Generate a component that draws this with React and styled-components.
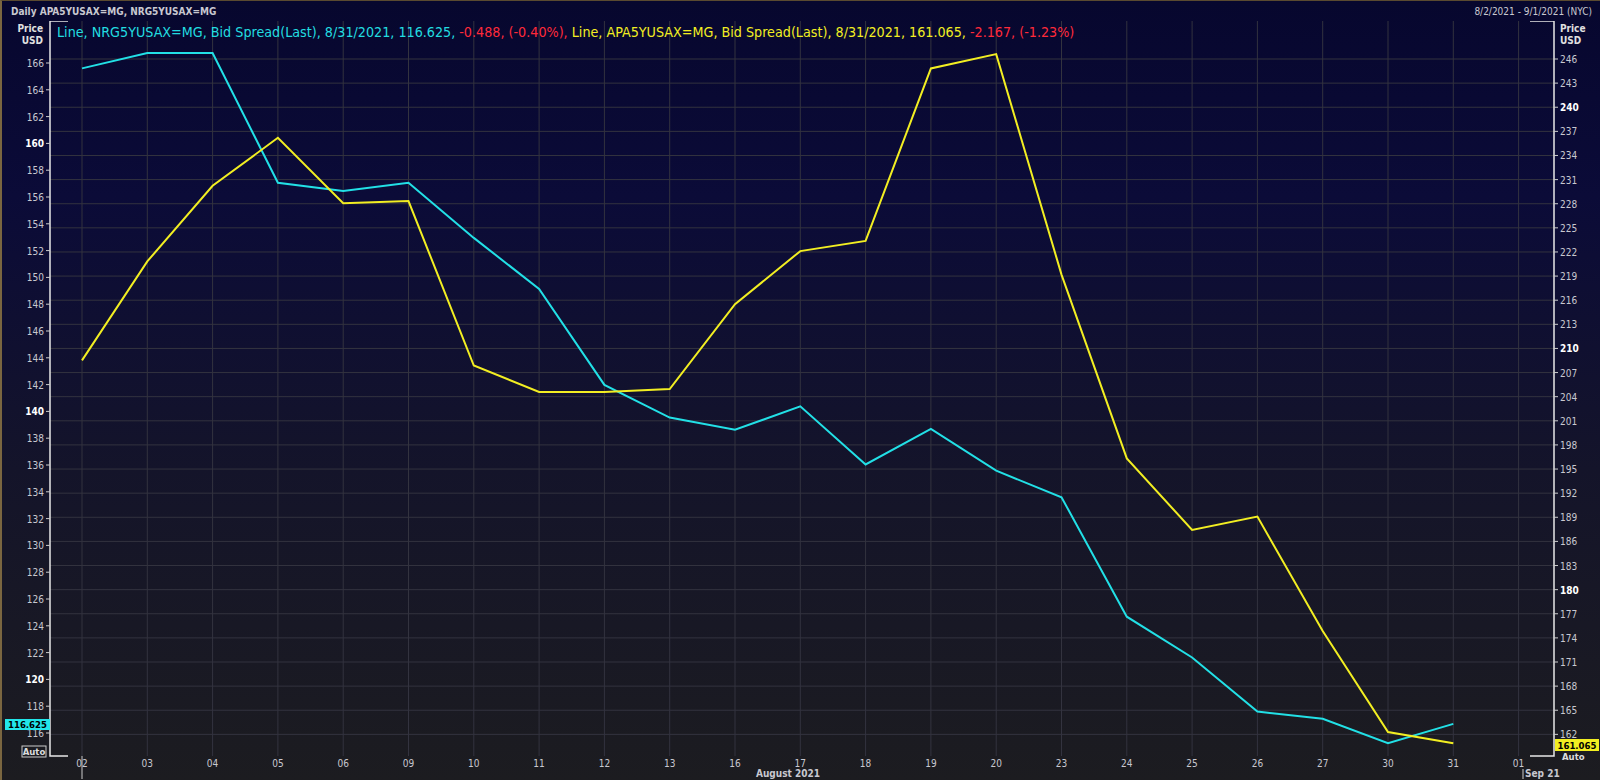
import React from "react";
import styled, { createGlobalStyle } from "styled-components";

const Global = createGlobalStyle`
  html, body { margin: 0; padding: 0; background: #0b0b1e; }
  body { font-family: Tahoma, "DejaVu Sans", sans-serif; }
`;

const Frame = styled.div`
  width: 1600px; height: 780px; box-sizing: border-box;
  border-left: 2px solid #7a6640; border-top: 1px solid #5a4a30;
  background: linear-gradient(#07072e 0%, #0b0b38 25%, #14142a 60%, #1c1c20 100%);
  position: relative; overflow: hidden;
`;
const Header = styled.div`
  height: 20px; display: flex; justify-content: space-between; align-items: center;
  padding: 0 8px 0 9px; font: bold 10px "DejaVu Sans Condensed", "DejaVu Sans", sans-serif; color: #c8c8d0;
`;
const Range = styled.span` font-weight: normal; `;
const Chart = styled.svg` display: block; `;
const Legend = styled.div`
  position: absolute; left: 55px; top: 23px;
  font: 14.2px "DejaVu Sans Condensed", "DejaVu Sans", sans-serif;
`;
const Seg = styled.span` color: ${p => p.$c}; white-space: pre; `;

const days = ["02","03","04","05","06","09","10","11","12","13","16","17","18","19","20","23","24","25","26","27","30","31","01"];
const X0 = 80, DX = 65.3;
const xs = days.map((_, i) => X0 + i * DX);
const S = 1.021;
const cy = [66,51,51,178,186,178,232,282,376,408,420,397,454,419,460,486,603,643,696,703,727,708];
const yy = [352,255,181,134,198,196,357,383,383,380,297,245,235,66,52,268,448,518,505,617,716,727];
const pts = a => a.map((y, i) => `${xs[i]},${(y * S).toFixed(1)}`).join(" ");
const LY = v => 62 + (166 - v) * 13.4;
const RY = v => 58 + (246 - v) * 8.04;
const left = []; for (let v = 166; v >= 116; v -= 2) left.push(v);
const right = []; for (let v = 246; v >= 162; v -= 3) right.push(v);
const AX_L = 48, AX_R = 1552, AX_B = 755, TOP = 20;

export default function App() {
  return (
    <Frame>
      <Global />
      <Header>
        <span>Daily APA5YUSAX=MG, NRG5YUSAX=MG</span>
        <Range>8/2/2021 - 9/1/2021 (NYC)</Range>
      </Header>
      <Chart width="1598" height="759" viewBox="0 20 1598 759">
        <g stroke="#33333f" strokeWidth="1">
          {right.map(v => <line key={v} x1={AX_L} x2={AX_R} y1={RY(v)} y2={RY(v)} />)}
          {xs.map((x, i) => <line key={i} x1={x} x2={x} y1={TOP} y2={AX_B} />)}
        </g>
        <g stroke="#e8e8e8" strokeWidth="1.5" fill="none">
          <polyline points={`66,${TOP} ${AX_L},${TOP} ${AX_L},${AX_B} 66,${AX_B}`} />
          <polyline points={`1528,${TOP} ${AX_R},${TOP} ${AX_R},${AX_B} 1528,${AX_B}`} />
        </g>
        <g fill="#c8c8d0" fontFamily="Tahoma, 'DejaVu Sans Condensed', sans-serif" fontSize="10">
          <text x="41" y="31" textAnchor="end" fontWeight="bold" fill="#e0e0e0">Price</text>
          <text x="41" y="43" textAnchor="end" fontWeight="bold" fill="#e0e0e0">USD</text>
          <text x="1558" y="31" fontWeight="bold" fill="#e0e0e0">Price</text>
          <text x="1558" y="43" fontWeight="bold" fill="#e0e0e0">USD</text>
          {left.map(v => (
            <g key={v}>
              <line x1={AX_L - 4} x2={AX_L} y1={LY(v)} y2={LY(v)} stroke="#ccc" />
              <text x="42" y={LY(v) + 4} textAnchor="end" fontWeight={v % 20 === 0 ? "bold" : "normal"} fill={v % 20 === 0 ? "#fff" : "#c8c8d0"}>{v}</text>
            </g>
          ))}
          {right.map(v => (
            <g key={v}>
              <line x1={AX_R} x2={AX_R + 4} y1={RY(v)} y2={RY(v)} stroke="#ccc" />
              <text x="1558" y={RY(v) + 4} fontWeight={v % 30 === 0 ? "bold" : "normal"} fill={v % 30 === 0 ? "#fff" : "#c8c8d0"}>{v}</text>
            </g>
          ))}
          {xs.map((x, i) => <text key={i} x={x} y="766" textAnchor="middle">{days[i]}</text>)}
          <line x1="80" x2="80" y1={AX_B} y2="778" stroke="#ccc" />
          <text x="786" y="776" textAnchor="middle" fontWeight="bold">August 2021</text>
          <line x1="1521" x2="1521" y1="768" y2="778" stroke="#ccc" />
          <text x="1523" y="776" fontWeight="bold">Sep 21</text>
        </g>
        <polyline points={pts(cy)} fill="none" stroke="#22e0e6" strokeWidth="2" />
        <polyline points={pts(yy)} fill="none" stroke="#f2ee22" strokeWidth="2" />
        <g fontFamily="Tahoma, 'DejaVu Sans Condensed', sans-serif" fontSize="9.5" fontWeight="bold">
          <rect x="3" y="718" width="45" height="11" fill="#22e6ea" />
          <text x="25.5" y="727" textAnchor="middle" fill="#000">116.625</text>
          <rect x="20" y="745" width="24" height="11" fill="none" stroke="#ccc" />
          <text x="32" y="754" textAnchor="middle" fill="#ddd">Auto</text>
          <rect x="1553" y="738" width="44" height="12" fill="#f2ee22" />
          <text x="1575" y="748" textAnchor="middle" fill="#000">161.065</text>
          <text x="1560" y="759" fill="#ddd">Auto</text>
        </g>
      </Chart>
      <Legend>
        <Seg $c="#22dde0">Line, NRG5YUSAX=MG, Bid Spread(Last), 8/31/2021, 116.625, </Seg>
        <Seg $c="#ff2a3a">-0.488, (-0.40%), </Seg>
        <Seg $c="#f2ee22">Line, APA5YUSAX=MG, Bid Spread(Last), 8/31/2021, 161.065, </Seg>
        <Seg $c="#ff2a3a">-2.167, (-1.23%)</Seg>
      </Legend>
    </Frame>
  );
}
